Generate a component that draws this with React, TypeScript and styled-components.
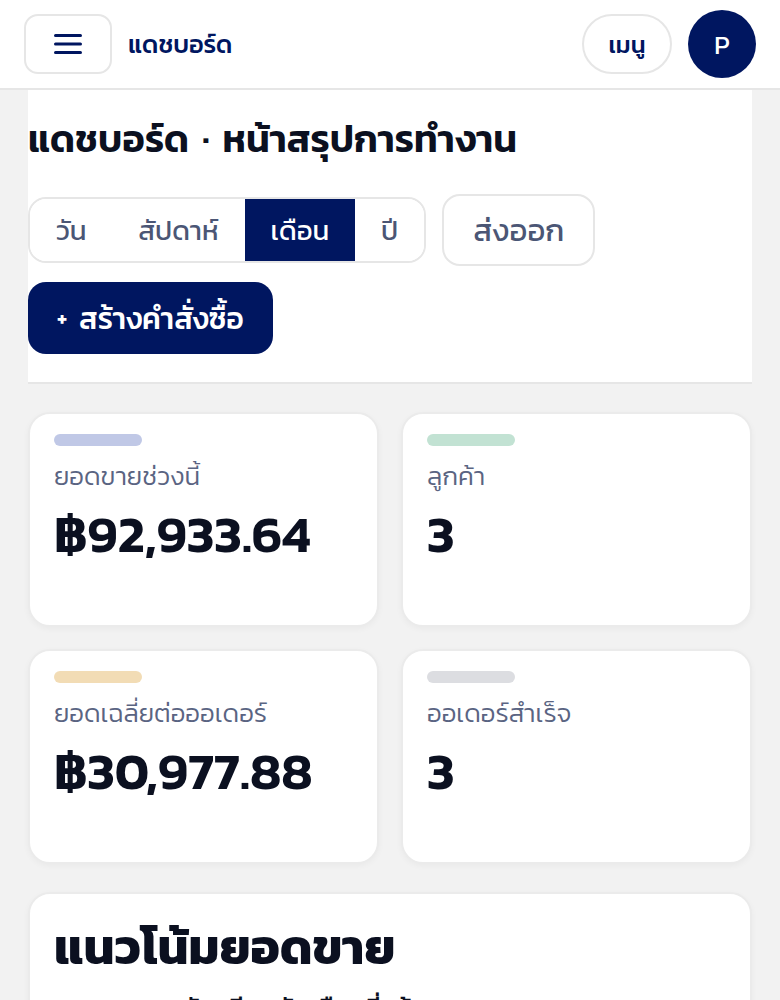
import React from "react";
import styled, { createGlobalStyle } from "styled-components";

const GlobalStyle = createGlobalStyle`
  * { box-sizing: border-box; }
  html, body { margin: 0; padding: 0; background: #f2f2f2; }
  body {
    font-family: Kanit, "Noto Sans Thai", "Noto Sans", sans-serif;
    color: #0b1020;
  }
  button { font-family: inherit; cursor: pointer; }
`;

const NAVY = "#001660";

const Header = styled.header`
  height: 90px;
  background: #fff;
  border-bottom: 2px solid #e6e6e6;
  display: flex;
  align-items: center;
  padding: 0 24px;
  gap: 16px;
`;

const IconButton = styled.button`
  width: 88px;
  height: 60px;
  border: 2px solid #e6e6e6;
  border-radius: 14px;
  background: #fff;
  display: flex;
  align-items: center;
  justify-content: center;
  padding: 0;
`;

const Brand = styled.div`
  font-size: 25px;
  font-weight: 500;
  color: ${NAVY};
  flex: 1;
`;

const PillButton = styled.button`
  height: 60px;
  width: 90px;
  padding: 0;
  border: 2px solid #e6e6e6;
  border-radius: 30px;
  background: #fff;
  font-size: 24px;
  font-weight: 500;
  color: ${NAVY};
`;

const Avatar = styled.div`
  width: 68px;
  height: 68px;
  border-radius: 50%;
  background: ${NAVY};
  color: #fff;
  display: flex;
  align-items: center;
  justify-content: center;
  font-size: 26px;
  font-weight: 400;
`;

const Main = styled.main`
  padding: 0 28px 40px;
  display: flex;
  flex-direction: column;
  gap: 28px;
`;

const PageHead = styled.section`
  background: #fff;
  border-bottom: 2px solid #e6e6e6;
  padding: 20px 0 28px;
  display: flex;
  flex-direction: column;
`;

const Title = styled.h1`
  margin: 0;
  height: 58px;
  font-size: 38px;
  font-weight: 600;
  line-height: 58px;
  color: #0b1020;
  white-space: nowrap;
`;

const Dot = styled.span`
  margin: 0 5px;
`;

const Toolbar = styled.div`
  margin-top: 26px;
  height: 72px;
  display: flex;
  align-items: center;
  gap: 16px;
`;

const Segmented = styled.div`
  display: flex;
  height: 66px;
  border: 2px solid #e6e6e6;
  border-radius: 18px;
  overflow: hidden;
`;

const Segment = styled.button<{ $active?: boolean }>`
  border: 0;
  padding: 0 26px;
  font-size: 27.5px;
  font-weight: 400;
  background: ${(p) => (p.$active ? NAVY : "#fff")};
  color: ${(p) => (p.$active ? "#fff" : "#4b5675")};
`;

const OutlineButton = styled.button`
  height: 72px;
  padding: 0 29px;
  border: 2px solid #e6e6e6;
  border-radius: 18px;
  background: #fff;
  font-size: 31px;
  font-weight: 400;
  color: #4b5675;
`;

const PrimaryButton = styled.button`
  margin-top: 16px;
  align-self: flex-start;
  height: 72px;
  padding: 0 29px;
  border: 0;
  border-radius: 18px;
  background: ${NAVY};
  color: #fff;
  font-size: 30px;
  font-weight: 500;
  display: flex;
  align-items: center;
  gap: 12px;
`;

const Plus = styled.span`
  font-size: 22px;
  font-weight: 600;
`;

const StatGrid = styled.section`
  display: grid;
  grid-template-columns: 1fr 1fr;
  gap: 22px;
`;

const Card = styled.div`
  background: #fff;
  border: 2px solid #ebebeb;
  border-radius: 22px;
  box-shadow: 0 2px 6px rgba(0, 0, 0, 0.04);
`;

const StatCard = styled(Card)`
  height: 215px;
  padding: 20px 24px;
  display: flex;
  flex-direction: column;
`;

const Accent = styled.div<{ $color: string }>`
  width: 88px;
  height: 12px;
  border-radius: 6px;
  background: ${(p) => p.$color};
`;

const StatLabel = styled.div`
  margin-top: 10px;
  font-size: 26px;
  font-weight: 300;
  line-height: 40px;
  color: #5a6482;
  white-space: nowrap;
`;

const StatValue = styled.div`
  margin-top: 5px;
  font-size: 52px;
  font-weight: 600;
  line-height: 66px;
  color: #0b1020;
`;

const ChartCard = styled(Card)`
  padding: 20px 24px;
  min-height: 200px;
`;

const ChartTitle = styled.h2`
  margin: 0;
  font-size: 49px;
  font-weight: 700;
  line-height: 66px;
  color: #0b1020;
`;

const ChartSub = styled.div`
  margin-top: 6px;
  font-size: 26px;
  font-weight: 500;
  color: #0b1020;
  line-height: 44px;
`;

const stats = [
  { label: "ยอดขายช่วงนี้", value: "฿92,933.64", color: "#c0c8e6" },
  { label: "ลูกค้า", value: "3", color: "#c2e2d3" },
  { label: "ยอดเฉลี่ยต่อออเดอร์", value: "฿30,977.88", color: "#f2dcb5" },
  { label: "ออเดอร์สำเร็จ", value: "3", color: "#dcdde1" },
];

function Hamburger() {
  return (
    <svg width="28" height="24" viewBox="0 0 28 24" fill="none">
      <path d="M1.5 3.5h25M1.5 12h25M1.5 20.5h25" stroke={NAVY} strokeWidth="3" strokeLinecap="round" />
    </svg>
  );
}

export default function App() {
  return (
    <>
      <GlobalStyle />
      <Header>
        <IconButton aria-label="menu">
          <Hamburger />
        </IconButton>
        <Brand>แดชบอร์ด</Brand>
        <PillButton>เมนู</PillButton>
        <Avatar>P</Avatar>
      </Header>
      <Main>
        <PageHead>
          <Title>
            แดชบอร์ด <Dot>·</Dot> หน้าสรุปการทำงาน
          </Title>
          <Toolbar>
            <Segmented>
              <Segment>วัน</Segment>
              <Segment>สัปดาห์</Segment>
              <Segment $active>เดือน</Segment>
              <Segment>ปี</Segment>
            </Segmented>
            <OutlineButton>ส่งออก</OutlineButton>
          </Toolbar>
          <PrimaryButton>
            <Plus>+</Plus>
            สร้างคำสั่งซื้อ
          </PrimaryButton>
        </PageHead>
        <StatGrid>
          {stats.map((s) => (
            <StatCard key={s.label}>
              <Accent $color={s.color} />
              <StatLabel>{s.label}</StatLabel>
              <StatValue>{s.value}</StatValue>
            </StatCard>
          ))}
        </StatGrid>
        <ChartCard>
          <ChartTitle>แนวโน้มยอดขาย</ChartTitle>
          <ChartSub>ยอดขายรายวัน เทียบกับเดือนที่แล้ว</ChartSub>
        </ChartCard>
      </Main>
    </>
  );
}
